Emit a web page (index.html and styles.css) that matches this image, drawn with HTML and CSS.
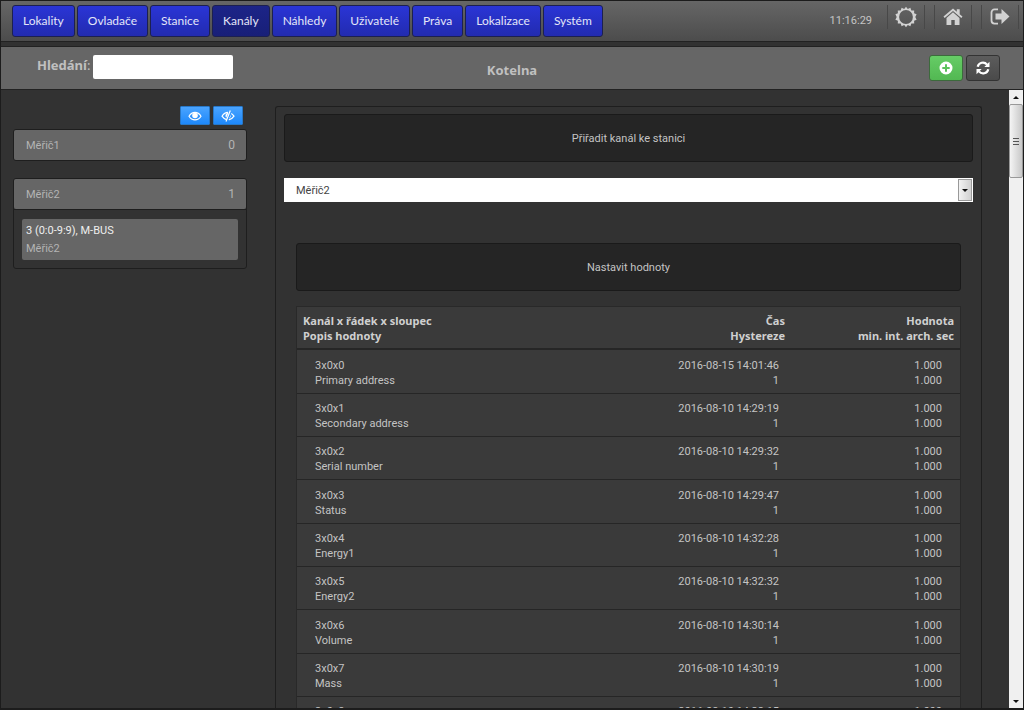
FILE: index.html
```html
<!DOCTYPE html>
<html lang="cs">
<head>
<meta charset="utf-8">
<title>Kotelna</title>
<link rel="stylesheet" href="styles.css">
</head>
<body>
<header class="topbar">
  <nav class="menu">
    <button class="menu-item">Lokality</button>
    <button class="menu-item">Ovladače</button>
    <button class="menu-item">Stanice</button>
    <button class="menu-item active">Kanály</button>
    <button class="menu-item">Náhledy</button>
    <button class="menu-item">Uživatelé</button>
    <button class="menu-item">Práva</button>
    <button class="menu-item">Lokalizace</button>
    <button class="menu-item">Systém</button>
  </nav>
  <div class="tools">
    <time class="clock">11:16:29</time>
    <button class="tool" aria-label="Nastavení"><svg width="22" height="22" viewBox="0 0 22 22"><path fill-rule="evenodd" d="M11 .8l1.800 2.200 2.600-1.300.9 2.800 2.900-.1-.1 2.900 2.500 1L20.300 11l1.300 2.700-2.500 1 .1 2.900-2.900-.1-.9 2.800-2.600-1.300L11 21.200 9.200 19l-2.600 1.300-.9-2.800-2.900.1.100-2.900-2.500-1L1.700 11 .4 8.300l2.500-1-.1-2.900 2.900.1.900-2.800L9.200 3zM11 4.100a6.900 6.900 0 1 0 0 13.800 6.900 6.900 0 0 0 0-13.800z"/></svg></button>
    <button class="tool" aria-label="Domů"><svg width="22" height="22" viewBox="0 0 22 22"><path d="M11 2.500L1.500 10.600l1.200 1.500L11 5l8.300 7.100 1.200-1.500L17.700 8.200V3.300h-2.900v2.400zM11 6.300l-6.500 5.600V19H9.300v-5h3.400v5h4.800v-7.100z"/></svg></button>
    <button class="tool" aria-label="Odhlásit"><svg width="22" height="22" viewBox="0 0 22 22"><path fill="none" stroke="#d2d2d2" stroke-width="1.800" d="M9 3.400H5.500A3 3 0 0 0 2.500 6.400v8.200a3 3 0 0 0 3 3H9"/><path d="M6.500 7.500h6V3l8 7.500-8 7.500v-4.500h-6z"/></svg></button>
  </div>
</header>

<section class="subbar">
  <div class="search">
    <label for="search">Hledání<span class="colon">:</span></label>
    <input id="search" type="text">
  </div>
  <h1 class="title">Kotelna</h1>
  <div class="actions">
    <button class="action add" aria-label="Přidat"><svg width="14" height="14" viewBox="0 0 14 14"><path fill-rule="evenodd" d="M7 .500a6.500 6.500 0 1 0 0 13 6.500 6.500 0 0 0 0-13zM6 3.300h2V6h2.700v2H8v2.700H6V8H3.300V6H6z"/></svg></button>
    <button class="action" aria-label="Obnovit"><svg width="14" height="14" viewBox="0 0 14 14"><path fill="none" stroke="#fff" stroke-width="2.200" d="M1.700 5.800A5.300 5.300 0 0 1 11 3.600M12.300 8.200A5.300 5.300 0 0 1 3 10.400"/><path d="M13.500.8v5.200H8.300zM.500 13.200V8h5.200z"/></svg></button>
  </div>
</section>

<main class="main">
  <aside class="sidebar">
    <div class="toggles">
      <button class="toggle" aria-label="Zobrazit"><svg width="14" height="12" viewBox="0 0 14 12"><path fill="none" stroke="#fff" stroke-width="1.200" d="M1 6.200C2.500 3.700 4.600 2.300 7 2.300s4.500 1.400 6 3.900c-1.500 2.400-3.600 3.600-6 3.600S2.500 8.600 1 6.200z"/><circle cx="7" cy="5.500" r="2.800"/></svg></button>
      <button class="toggle" aria-label="Skrýt"><svg width="14" height="12" viewBox="0 0 14 12"><path fill="none" stroke="#fff" stroke-width="1.200" d="M5.500 9.600C3.700 9.200 2.200 8 1 6.200 2.500 3.700 4.600 2.300 7 2.300M10.300 3.400C11.300 4 12.200 5 13 6.200c-1.400 2.100-3 3.300-5.200 3.600M9.300.5L5 11.500"/><path d="M7.500 2.700A2.900 2.900 0 0 0 5.300 7.700zM9.800 4.800L8 8.800c1.300-.7 2.200-2.400 1.800-4z"/></svg></button>
    </div>
    <section class="group">
      <div class="group-head"><span>Měřič1</span><span class="count">0</span></div>
    </section>
    <section class="group">
      <div class="group-head"><span>Měřič2</span><span class="count">1</span></div>
      <div class="group-body">
        <div class="channel"><div class="channel-name">3 (0:0-9:9), M-BUS</div><div>Měřič2</div></div>
      </div>
    </section>
  </aside>

  <section class="content">
    <button class="wide">Přiřadit kanál ke stanici</button>
    <div class="picker">
      <select class="select" aria-label="Stanice"><option>Měřič2</option></select>
      <span class="picker-arrow"></span>
    </div>
    <div class="values">
      <button class="wide">Nastavit hodnoty</button>
      <table class="table">
        <thead>
          <tr><th>Kanál x řádek x sloupec<br>Popis hodnoty</th><th>Čas<br>Hystereze</th><th>Hodnota<br>min. int. arch. sec</th></tr>
        </thead>
        <tbody>
          <tr><td>3x0x0<br>Primary address</td><td>2016-08-15 14:01:46<br>1</td><td>1.000<br>1.000</td></tr>
          <tr><td>3x0x1<br>Secondary address</td><td>2016-08-10 14:29:19<br>1</td><td>1.000<br>1.000</td></tr>
          <tr><td>3x0x2<br>Serial number</td><td>2016-08-10 14:29:32<br>1</td><td>1.000<br>1.000</td></tr>
          <tr><td>3x0x3<br>Status</td><td>2016-08-10 14:29:47<br>1</td><td>1.000<br>1.000</td></tr>
          <tr><td>3x0x4<br>Energy1</td><td>2016-08-10 14:32:28<br>1</td><td>1.000<br>1.000</td></tr>
          <tr><td>3x0x5<br>Energy2</td><td>2016-08-10 14:32:32<br>1</td><td>1.000<br>1.000</td></tr>
          <tr><td>3x0x6<br>Volume</td><td>2016-08-10 14:30:14<br>1</td><td>1.000<br>1.000</td></tr>
          <tr><td>3x0x7<br>Mass</td><td>2016-08-10 14:30:19<br>1</td><td>1.000<br>1.000</td></tr>
          <tr><td>3x0x8</td><td>2016-08-10 14:33:15</td><td>1.000</td></tr>
        </tbody>
      </table>
    </div>
  </section>

  <div class="scrollbar">
    <span class="arrow up"></span>
    <div class="track"><div class="thumb"></div></div>
    <span class="arrow down"></span>
  </div>
</main>
</body>
</html>
```
FILE: styles.css
```css
* { box-sizing: border-box; }

body {
  margin: 0;
  height: 100vh;
  display: flex;
  flex-direction: column;
  overflow: hidden;
  background: #323232;
  border: 1px solid #1c1c1c;
  border-bottom-width: 2px;
  color: #c4c4c4;
  font: 11px/15px Roboto, sans-serif;
}

button, input, select { font: inherit; color: inherit; }
button { cursor: pointer; }
svg { display: block; fill: currentColor; }

.topbar {
  flex: none;
  display: flex;
  justify-content: space-between;
  height: 41px;
  padding: 4px 4px 0 11px;
  background: linear-gradient(#666, #4c4c4c);
  border-bottom: 1px solid #222;
}

.menu { display: flex; gap: 2px; }

.menu-item {
  height: 32px;
  padding: 0 10px;
  border: 1px solid #1c2050;
  border-radius: 3px;
  background: linear-gradient(#2a35d6, #222bb0);
  color: #e4e6f8;
  font: 12px/16px Lato, sans-serif;
}
.menu-item.active { background: linear-gradient(#1c2488, #181f78); }

.tools { display: flex; gap: 9px; }
.clock { padding: 8px 6px 0 0; }

.tool {
  height: 24px;
  padding: 0 7px;
  border: solid #484848;
  border-width: 0 1px;
  background: none;
  color: #d2d2d2;
}

.subbar {
  flex: none;
  display: grid;
  grid-template-columns: 1fr auto 1fr;
  align-items: start;
  height: 44px;
  margin-top: 4px;
  padding: 8px 23px 0;
  background: #666;
  border: solid #222;
  border-width: 1px 0;
}

.search { display: flex; gap: 3px; padding-left: 13px; }
.search label { font: bold 13px/20px "Noto Sans", sans-serif; color: #c0c0c0; }
.colon { font-weight: normal; }
.search input {
  width: 140px;
  height: 24px;
  padding: 0 6px;
  border: 0;
  border-radius: 2px;
  background: #fff;
  color: #333;
}

.title { margin: 5px 0 0; font: bold 13px/20px "Noto Sans", sans-serif; color: #c0c0c0; }

.actions { display: flex; justify-content: flex-end; gap: 3px; }

.action {
  display: grid;
  place-items: center;
  width: 34px;
  height: 26px;
  padding: 0;
  border: 1px solid #333;
  border-radius: 3px;
  background: linear-gradient(#5c5c5c, #4a4a4a);
  color: #fff;
}
.action.add { background: linear-gradient(#66cc66, #52b852); border-color: #3c6a3c; }

.main { flex: 1; min-height: 0; display: flex; }

.sidebar { flex: none; width: 246px; padding: 16px 0 0 12px; color: #b4b4b4; }

.toggles { display: flex; justify-content: flex-end; gap: 3px; padding-right: 4px; margin-bottom: 4px; }

.toggle {
  display: grid;
  place-items: center;
  width: 30px;
  height: 19px;
  padding: 0;
  border: 1px solid #2878c8;
  border-radius: 1px;
  background: linear-gradient(#4aa4ff, #1e88fa);
  color: #fff;
}

.group { margin-bottom: 17px; border: 1px solid #1e1e1e; border-radius: 3px; }
.group-head {
  display: flex;
  justify-content: space-between;
  padding: 8px 11px 7px 12px;
  border-radius: 2px;
  background: #666;
}
.group-head .count { font-size: 12px; }
.group-body { padding: 9px 8px 8px; border-top: 1px solid #1e1e1e; }
.channel { padding: 3px 4px 2px; border-radius: 2px; background: #666; line-height: 18px; }
.channel-name { color: #eee; }

.content {
  flex: 1;
  min-width: 0;
  margin: 16px 27px 0 28px;
  padding: 7px 8px 0;
  border: 1px solid #1e1e1e;
  border-bottom: 0;
  border-radius: 3px 3px 0 0;
  overflow: hidden;
}

.wide {
  display: block;
  width: 100%;
  height: 48px;
  border: 1px solid #1a1a1a;
  border-radius: 3px;
  background: #252525;
}

.picker { position: relative; margin: 16px 0 41px; }
.select {
  display: block;
  width: 100%;
  height: 24px;
  padding: 1px 12px 0;
  border: 0;
  border-radius: 0;
  background: #fff;
  color: #444;
  appearance: none;
}
.picker-arrow {
  position: absolute;
  top: 1px;
  right: 1px;
  bottom: 1px;
  width: 14px;
  display: grid;
  place-items: center;
  border: 1px solid #999;
  background: linear-gradient(90deg, #f2f2f2, #d0d0d0);
  pointer-events: none;
}
.picker-arrow::after, .arrow::after {
  content: "";
  border: 3px solid transparent;
  border-top-color: #111;
  border-bottom: 0;
}

.values { padding: 0 12px; }

.table {
  width: 100%;
  margin-top: 15px;
  table-layout: fixed;
  border-collapse: separate;
  border-spacing: 0;
  border: 1px solid #292929;
  background: #3a3a3a;
}
.table th {
  padding: 6px 6px 5px;
  border-bottom: 2px solid #262626;
  color: #d0d0d0;
  font: bold 11px/15px "Noto Sans", sans-serif;
  text-align: right;
}
.table td {
  padding: 7px 18px 5px 6px;
  border-bottom: 1px solid #262626;
  text-align: right;
  vertical-align: top;
}
.table tr > :first-child { width: 49%; text-align: left; }
.table tr > :last-child { width: 169px; }
.table td:first-child { padding-left: 18px; }
.table td:nth-child(2) { padding-right: 12px; }
.table tbody tr:nth-child(3n + 1) td { padding-top: 8px; }

.scrollbar {
  flex: none;
  width: 14px;
  display: flex;
  flex-direction: column;
  background: #f0f0f0;
}
.arrow { height: 14px; display: grid; place-items: center; }
.arrow.up::after { transform: rotate(180deg); }
.track { flex: 1; }
.thumb {
  height: 74px;
  border: 1px solid #999;
  border-radius: 2px;
  background:
    repeating-linear-gradient(#555 0 1px, transparent 1px 3px) center / 6px 7px no-repeat,
    linear-gradient(90deg, #f4f4f4, #c8c8c8);
}
```
